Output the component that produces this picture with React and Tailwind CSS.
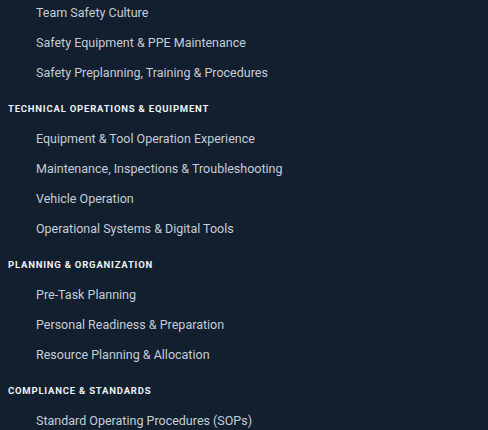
const sections = [
  {
    title: null,
    items: [
      "Team Safety Culture",
      "Safety Equipment & PPE Maintenance",
      "Safety Preplanning, Training & Procedures",
    ],
  },
  {
    title: "Technical Operations & Equipment",
    items: [
      "Equipment & Tool Operation Experience",
      "Maintenance, Inspections & Troubleshooting",
      "Vehicle Operation",
      "Operational Systems & Digital Tools",
    ],
  },
  {
    title: "Planning & Organization",
    items: [
      "Pre-Task Planning",
      "Personal Readiness & Preparation",
      "Resource Planning & Allocation",
    ],
  },
  {
    title: "Compliance & Standards",
    items: ["Standard Operating Procedures (SOPs)"],
  },
];

export default function App() {
  return (
    <div
      className="min-h-screen w-full overflow-hidden bg-[#121f2e]"
      style={{ fontFamily: '"Roboto", "Liberation Sans", sans-serif' }}
    >
      <div className="-mt-[2px]">
        {sections.map((section, i) => (
          <div key={i}>
            {section.title && (
              <h3 className="pl-2 pt-[15px] pb-[9px] text-[9.5px] leading-[12px] font-bold uppercase tracking-[0.8px] text-[#eef2f6]">
                {section.title}
              </h3>
            )}
            <ul>
              {section.items.map((item) => (
                <li
                  key={item}
                  className="flex h-[30px] items-center pl-9 text-[12.5px] text-[#c5cdd7]"
                >
                  {item}
                </li>
              ))}
            </ul>
          </div>
        ))}
      </div>
    </div>
  );
}
